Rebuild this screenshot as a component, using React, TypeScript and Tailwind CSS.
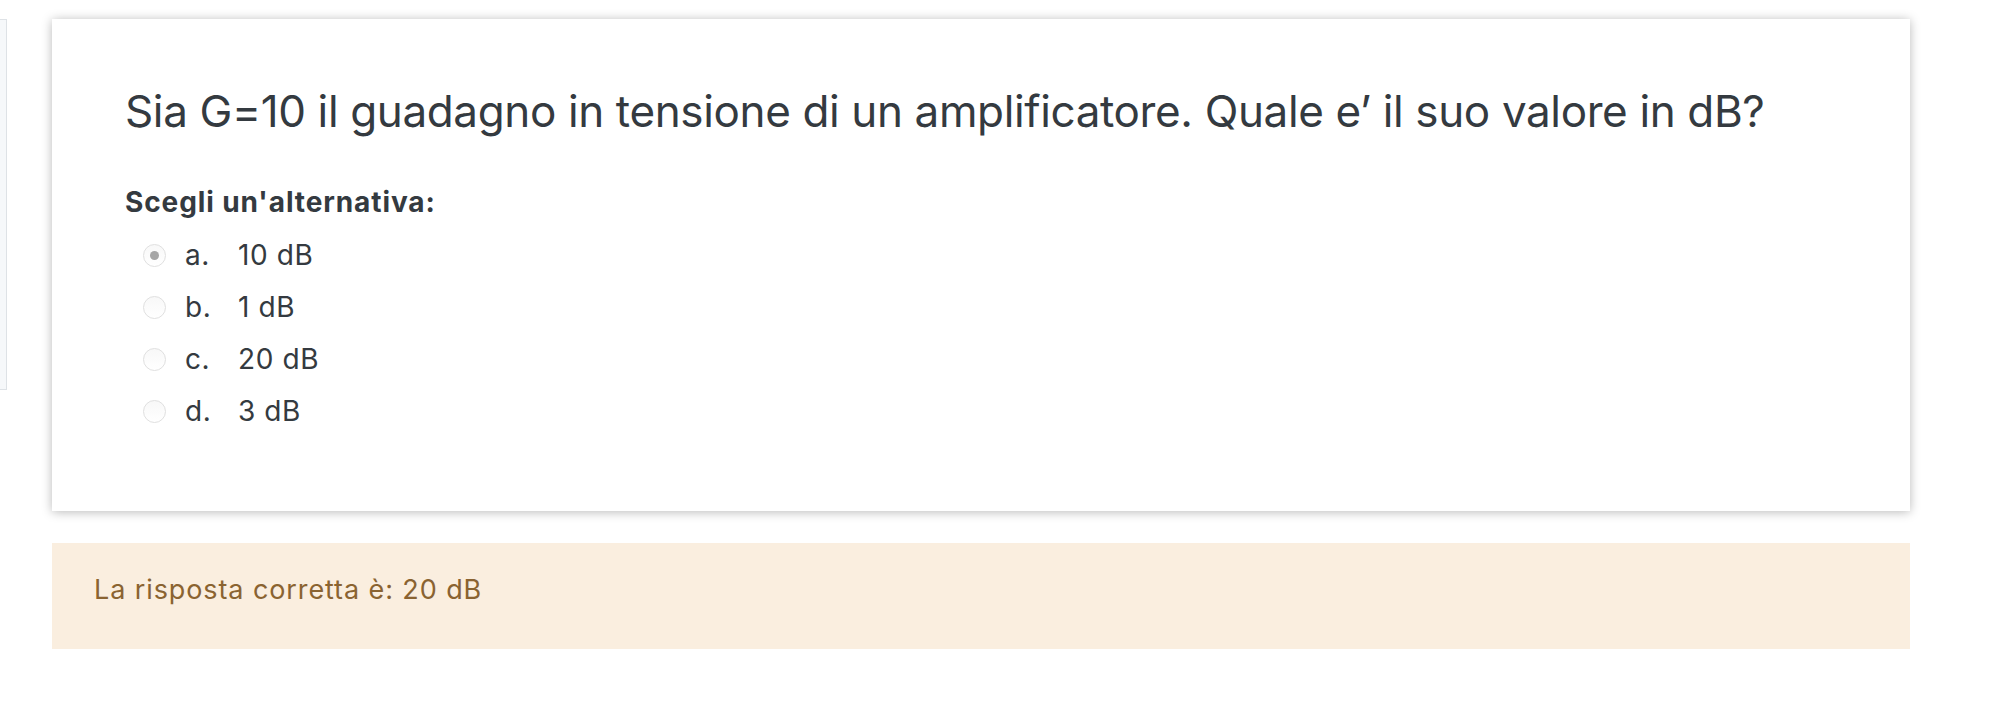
import type { ReactNode } from "react";

type Choice = {
  letter: string;
  text: string;
  checked?: boolean;
};

const choices: Choice[] = [
  { letter: "a.", text: "10 dB", checked: true },
  { letter: "b.", text: "1 dB" },
  { letter: "c.", text: "20 dB" },
  { letter: "d.", text: "3 dB" },
];

function Radio({ checked }: { checked?: boolean }) {
  return (
    <span className="flex h-[23px] w-[23px] shrink-0 items-center justify-center rounded-full border border-[#e0e0e0] bg-gradient-to-b from-[#f8f8f8] to-white">
      {checked ? <span className="h-[9px] w-[9px] rounded-full bg-[#a6a6a6]" /> : null}
    </span>
  );
}

function ChoiceRow({ choice }: { choice: Choice }) {
  return (
    <div className="flex h-[52px] items-center">
      <Radio checked={choice.checked} />
      <span className="ml-[19px] w-[53px]">{choice.letter}</span>
      <span>{choice.text}</span>
    </div>
  );
}

function Card({ children }: { children: ReactNode }) {
  return (
    <section className="h-[492px] bg-white shadow-[0_1px_10px_rgba(0,0,0,0.28)]">
      {children}
    </section>
  );
}

export default function App() {
  return (
    <div className="flex min-h-[702px] w-[2016px] bg-white font-['Inter','Liberation_Sans',sans-serif] text-[#343a40]">
      <aside className="mt-[19px] h-[371px] w-[7px] shrink-0 border border-l-0 border-[#dee2e6] bg-[#f6f8fa]" />

      <main className="ml-[45px] mt-[19px] w-[1858px]">
        <Card>
          <div className="pl-[73px] pt-[66px]">
            <h1 className="text-[44px] leading-[53px] font-normal tracking-[-0.37px]">
              Sia G=10 il guadagno in tensione di un amplificatore. Quale e’ il suo valore in dB?
            </h1>
            <div className="mt-[48px] text-[28px] leading-[32px] font-bold tracking-[0.9px]">Scegli un'alternativa:</div>
            <div className="mt-[11px] pl-[18px] text-[28px] tracking-[0.6px]">
              {choices.map((choice) => (
                <ChoiceRow key={choice.letter} choice={choice} />
              ))}
            </div>
          </div>
        </Card>

        <div className="mt-[32px] flex h-[106px] items-center bg-[#faeedf] pb-[12px] pl-[42px] text-[27px] tracking-[0.9px] text-[#8a6331]">
          La risposta corretta è: 20 dB
        </div>
      </main>
    </div>
  );
}
